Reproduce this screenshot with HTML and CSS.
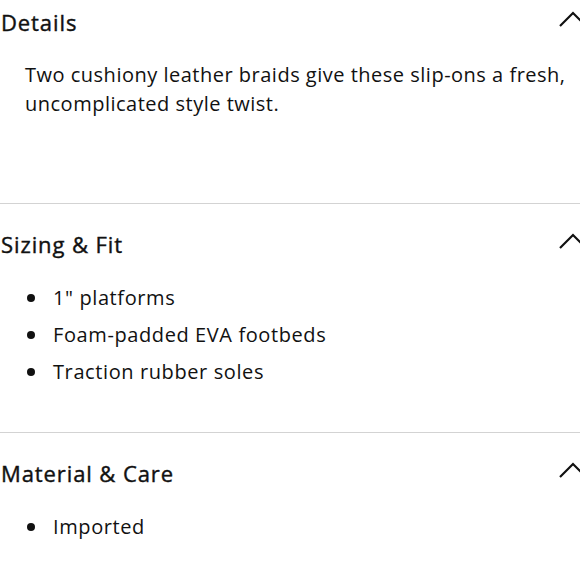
FILE: index.html
```html
<!DOCTYPE html>
<html>
<head>
<meta charset="utf-8">
<link rel="stylesheet" href="styles.css">
</head>
<body>
<div class="accordion">
  <section class="panel panel-first">
    <div class="panel-head">
      <h2 class="panel-title">Details</h2>
      <svg class="chevron" viewBox="0 0 28 16" width="28" height="16"><path d="M1 15 L14 2 L27 15" fill="none" stroke="#111" stroke-width="2.2"/></svg>
    </div>
    <p class="panel-text">Two cushiony leather braids give these slip-ons a fresh, uncomplicated style twist.</p>
  </section>
  <section class="panel panel-list">
    <div class="panel-head">
      <h2 class="panel-title">Sizing &amp; Fit</h2>
      <svg class="chevron" viewBox="0 0 28 16" width="28" height="16"><path d="M1 15 L14 2 L27 15" fill="none" stroke="#111" stroke-width="2.2"/></svg>
    </div>
    <ul class="panel-items">
      <li>1" platforms</li>
      <li>Foam-padded EVA footbeds</li>
      <li>Traction rubber soles</li>
    </ul>
  </section>
  <section class="panel panel-list">
    <div class="panel-head">
      <h2 class="panel-title">Material &amp; Care</h2>
      <svg class="chevron" viewBox="0 0 28 16" width="28" height="16"><path d="M1 15 L14 2 L27 15" fill="none" stroke="#111" stroke-width="2.2"/></svg>
    </div>
    <ul class="panel-items">
      <li>Imported</li>
    </ul>
  </section>
</div>
</body>
</html>
```
FILE: styles.css
```css
html, body {
  margin: 0;
  padding: 0;
  background: #fff;
  overflow: hidden;
}
body {
  font-family: "Open Sans", "Liberation Sans", sans-serif;
  color: #111;
}
.accordion {
  width: 594px;
}
.panel {
  border-top: 1px solid #d3d3d3;
  padding-left: 1px;
}
.panel-first {
  border-top: none;
}
.panel-head {
  display: flex;
  justify-content: space-between;
  align-items: center;
  height: 44px;
  padding-top: 18px;
  padding-bottom: 1px;
}
.panel-first .panel-head {
  padding-top: 0;
  padding-bottom: 0;
}
.panel-title {
  margin: 0;
  font-size: 22px;
  font-weight: 400;
  letter-spacing: 0.9px;
  line-height: 44px;
  -webkit-text-stroke: 0.4px #111;
}
.chevron {
  display: block;
  margin-right: 7px;
  margin-top: -6px;
}
.panel-text {
  margin: 0;
  padding: 16px 0 85px 24px;
  font-size: 20px;
  letter-spacing: 0.5px;
  line-height: 29px;
  max-width: 560px;
}
.panel-items {
  list-style: none;
  margin: 0;
  padding: 12px 0 42px 26px;
  font-size: 20px;
  letter-spacing: 0.6px;
  line-height: 37px;
}
.panel-items li {
  display: flex;
  align-items: center;
  gap: 18px;
}
.panel-items li::before {
  content: "";
  flex: none;
  width: 8px;
  height: 8px;
  border-radius: 50%;
  background: #111;
}
```
